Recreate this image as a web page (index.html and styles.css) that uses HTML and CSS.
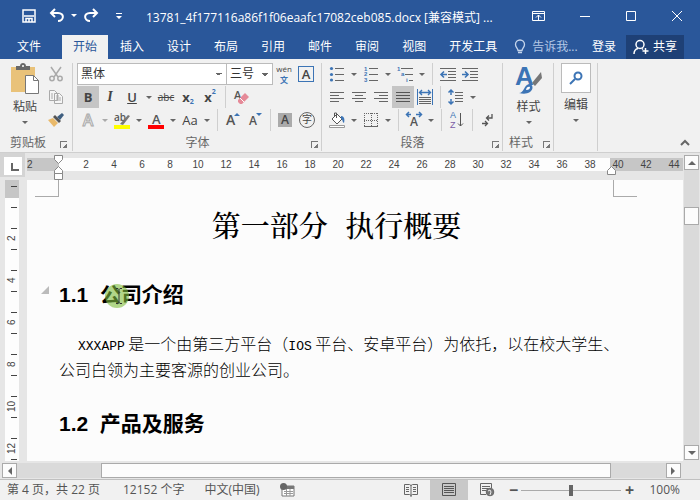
FILE: index.html
```
<!DOCTYPE html>
<html lang="zh-CN">
<head>
    <meta charset="UTF-8">
    <meta name="viewport" content="width=device-width, initial-scale=1.0">
    <title>13781_4f177116a86f1f06eaafc17082ceb085.docx</title>
    <link rel="stylesheet" href="styles.css">
</head>
<body>
    <header class="titlebar">
        <div class="quick-access">
            <button class="icon-btn" aria-label="保存"><svg width="16" height="16" viewBox="0 0 16 16" fill="none" stroke="#fff" stroke-width="1.500"><path d="M2 2h12v12H2zM3 8h10M5 14v-3.500h6V14M8 11v3"/></svg></button>
            <button class="icon-btn" aria-label="撤消"><svg width="16" height="16" viewBox="0 0 16 16" fill="none" stroke="#fff" stroke-width="2"><path d="M6 1L2 5l4 4M2 5h7c7 0 6 8 0 8"/></svg></button>
            <span class="caret"></span>
            <button class="icon-btn" aria-label="恢复"><svg width="16" height="16" viewBox="0 0 16 16" fill="none" stroke="#fff" stroke-width="2"><path d="M10 1l4 4-4 4M14 5H7c-7 0-6 8 0 8"/></svg></button>
            <button class="icon-btn" aria-label="自定义"><svg width="8" height="8" viewBox="0 0 8 8" fill="#fff"><path d="M1 1h6v1H1zM1 4h6L4 7z"/></svg></button>
        </div>
        <h1 class="doc-name">13781_4f177116a86f1f06eaafc17082ceb085.docx [兼容模式] ...</h1>
        <div class="window-controls">
            <button aria-label="功能区显示选项"><svg width="14" height="12" viewBox="0 0 14 12" fill="none" stroke="#fff"><path d="M.5 1.500h12v9H.5zM.5 3.500h12M6.500 10V5M4 7.500L6.500 5 9 7.500"/></svg></button>
            <button aria-label="最小化"><svg width="12" height="12" viewBox="0 0 12 12" stroke="#fff"><path d="M1 6.500h10"/></svg></button>
            <button aria-label="最大化"><svg width="12" height="12" viewBox="0 0 12 12" fill="none" stroke="#fff"><path d="M1.500 1.500h9v9h-9z"/></svg></button>
            <button aria-label="关闭"><svg width="12" height="12" viewBox="0 0 12 12" stroke="#fff"><path d="M1 1l10 10M11 1L1 11"/></svg></button>
        </div>
    </header>

    <nav class="tabs">
        <button class="tab file">文件</button>
        <button class="tab active">开始</button>
        <button class="tab">插入</button>
        <button class="tab">设计</button>
        <button class="tab">布局</button>
        <button class="tab">引用</button>
        <button class="tab">邮件</button>
        <button class="tab">审阅</button>
        <button class="tab">视图</button>
        <button class="tab">开发工具</button>
        <button class="tell-me"><svg width="12" height="16" viewBox="0 0 12 16" fill="none" stroke="#c5d5ec" stroke-width="1.300"><path d="M4 11.500c0-2-2.500-3-2.500-6a4.500 4.500 0 0 1 9 0c0 3-2.500 4-2.500 6zM4 13.500h4"/></svg>告诉我...</button>
        <button class="login">登录</button>
        <button class="share"><svg width="16" height="16" viewBox="0 0 16 16" fill="none" stroke="#fff" stroke-width="1.500"><circle cx="7" cy="5.500" r="4"/><path d="M1 15c0-3 2-5 4-5.500M9 9.500l1 1M12.500 9v6M9.500 12h6"/></svg>共享</button>
    </nav>

    <section class="ribbon">
        <div class="group clipboard">
            <div class="group-body">
                <button class="big-btn">
                    <svg width="30" height="32" viewBox="0 0 30 32"><path d="M1 4h24v25H1z" fill="#e9c279"/><path d="M6 7V3h4c0-4 6-4 6 0h4v4z" fill="#686868"/><circle cx="13" cy="3" r="1" fill="#fff"/><path d="M15.500 12.500h8l5 5v13h-13z" fill="#fff" stroke="#777"/><path d="M23.500 12.500v5h5" fill="none" stroke="#777"/></svg>
                    粘贴
                    <span class="caret"></span>
                </button>
                <div class="stack">
                    <button class="ib" aria-label="剪切"><svg width="16" height="16" viewBox="0 0 16 16" fill="none" stroke="#aaa" stroke-width="1.500"><path d="M3 1l7 10M13 1L6 11"/><circle cx="4" cy="12.500" r="2.200"/><circle cx="12" cy="12.500" r="2.200"/></svg></button>
                    <button class="ib" aria-label="复制"><svg width="16" height="16" viewBox="0 0 16 16" fill="#f6f6f6" stroke="#aaa"><path d="M1.500 1.500h5l3 3v7h-8zM6.500 4.500h5l3 3v7h-8z"/><path d="M3 5h2M3 7h2M3 9h2M8 9h5M8 11h5M8 7h3"/></svg></button>
                    <button class="ib" aria-label="格式刷"><svg width="18" height="16" viewBox="0 0 18 16"><path d="M1 8l5-2 5 5-4 4z" fill="#e9b96a"/><path d="M6 5l2-2 6 6-2 2z" fill="#555"/><path d="M10 5l5-4 2 2-4 5z" fill="#3f5f80"/></svg></button>
                </div>
            </div>
            <div class="group-label">剪贴板<i class="launcher"></i></div>
        </div>

        <div class="group font">
            <div class="rows">
                <div class="row">
                    <select class="font-name" aria-label="字体"><option>黑体</option></select>
                    <select class="font-size" aria-label="字号"><option>三号</option></select>
                    <button class="ib pinyin"><span>wén</span><b>文</b></button>
                    <button class="ib"><span class="char-border">A</span></button>
                </div>
                <div class="row">
                    <button class="ib on bold">B</button>
                    <button class="ib italic">I</button>
                    <button class="ib underline">U</button>
                    <span class="caret"></span>
                    <button class="ib strike">abc</button>
                    <button class="ib script">x<sub>2</sub></button>
                    <button class="ib script">x<sup>2</sup></button>
                    <span class="sep"></span>
                    <button class="ib" aria-label="清除格式"><svg width="16" height="16" viewBox="0 0 16 16"><text x="1" y="10" class="svg-letter" font-size="11">A</text><path d="M5 11l7-7 4 4-7 7H7l-2-2z" fill="#e58a98"/><path d="M7 9l4 4" stroke="#fff"/></svg></button>
                </div>
                <div class="row">
                    <button class="ib effect">A</button>
                    <span class="caret pale"></span>
                    <button class="ib" aria-label="突出显示"><svg width="18" height="20" viewBox="0 0 18 20"><text x="1" y="11" class="svg-letter" font-size="10">ab</text><path d="M7 14l8-9 2 1-7 9z" fill="#777"/><path d="M1 15h16v4H1z" fill="#ff0"/></svg></button>
                    <span class="caret"></span>
                    <button class="ib" aria-label="字体颜色"><svg width="16" height="20" viewBox="0 0 16 20"><text x="4" y="14" class="svg-letter" font-size="13">A</text><path d="M0 15h16v4H0z" fill="#f00"/></svg></button>
                    <span class="caret"></span>
                    <button class="ib case">Aa</button>
                    <span class="caret"></span>
                    <span class="sep"></span>
                    <button class="ib" aria-label="增大字号"><svg width="16" height="18" viewBox="0 0 16 18"><text x="1" y="14" class="svg-letter" font-size="14">A</text><path d="M9 5l3-3 3 3z" fill="#3c74b5"/></svg></button>
                    <button class="ib" aria-label="减小字号"><svg width="16" height="18" viewBox="0 0 16 18"><text x="2" y="14" class="svg-letter" font-size="12">A</text><path d="M9 2h6l-3 3z" fill="#3c74b5"/></svg></button>
                    <span class="sep"></span>
                    <button class="ib"><span class="char-shade">A</span></button>
                    <button class="ib"><span class="char-ring">字</span></button>
                </div>
            </div>
            <div class="group-label">字体<i class="launcher"></i></div>
        </div>

        <div class="group paragraph">
            <div class="rows">
                <div class="row">
                    <button class="ib" aria-label="项目符号"><svg width="16" height="16" viewBox="0 0 16 16"><path d="M6 2.500h9M6 8.500h9M6 14.500h9" stroke="#666"/><g fill="#3c74b5"><circle cx="2.500" cy="2.500" r="1.600"/><circle cx="2.500" cy="8.500" r="1.600"/><circle cx="2.500" cy="14" r="1.600"/></g></svg></button>
                    <span class="caret"></span>
                    <button class="ib" aria-label="编号"><svg width="16" height="16" viewBox="0 0 16 16"><path d="M6 2.500h9M6 8.500h9M6 14.500h9" stroke="#666"/><g fill="#3c74b5" font-family="Liberation Sans" font-size="6" font-weight="bold"><text x="1" y="5">1</text><text x="1" y="10">2</text><text x="1" y="16">3</text></g></svg></button>
                    <span class="caret"></span>
                    <button class="ib" aria-label="多级列表"><svg width="18" height="16" viewBox="0 0 18 16"><path d="M5 2.500h12M9 8.500h8M13 14.500h4" stroke="#666"/><g fill="#3c74b5" font-family="Liberation Sans" font-size="6" font-weight="bold"><text x="1" y="5">1</text><text x="5" y="10">a</text><text x="10" y="16">i</text></g></svg></button>
                    <span class="caret"></span>
                    <span class="sep"></span>
                    <button class="ib" aria-label="减少缩进"><svg width="16" height="14" viewBox="0 0 16 14"><path d="M0 1.500h16M8 4.500h8M8 7.500h8M8 10.500h8M0 13.500h16" stroke="#666"/><path d="M7 7.500H1M4 4.500l-3 3 3 3" fill="none" stroke="#3c74b5" stroke-width="1.600"/></svg></button>
                    <button class="ib" aria-label="增加缩进"><svg width="16" height="14" viewBox="0 0 16 14"><path d="M0 1.500h16M8 4.500h8M8 7.500h8M8 10.500h8M0 13.500h16" stroke="#666"/><path d="M0 7.500h6M3 4.500l3 3-3 3" fill="none" stroke="#3c74b5" stroke-width="1.600"/></svg></button>
                </div>
                <div class="row">
                    <button class="ib" aria-label="左对齐"><svg width="14" height="12" viewBox="0 0 14 12" stroke="#666"><path d="M0 1.500h14M0 4.500h9M0 7.500h14M0 10.500h9"/></svg></button>
                    <button class="ib" aria-label="居中"><svg width="14" height="12" viewBox="0 0 14 12" stroke="#666"><path d="M0 1.500h14M3 4.500h8M0 7.500h14M3 10.500h8"/></svg></button>
                    <button class="ib" aria-label="右对齐"><svg width="14" height="12" viewBox="0 0 14 12" stroke="#666"><path d="M0 1.500h14M5 4.500h9M0 7.500h14M5 10.500h9"/></svg></button>
                    <button class="ib on" aria-label="两端对齐"><svg width="14" height="12" viewBox="0 0 14 12" stroke="#555"><path d="M0 1.500h14M0 4.500h14M0 7.500h14M0 10.500h14"/></svg></button>
                    <button class="ib" aria-label="分散对齐"><svg width="16" height="16" viewBox="0 0 16 16" fill="none" stroke="#3c74b5"><path d="M.5 0v16M15.500 0v16"/><path d="M3 3.500h10M5 1L2.500 3.500 5 6M11 1l2.500 2.500L11 6" stroke-width="1.400"/><path d="M2 8.500h12M2 10.500h12M2 12.500h12M2 14.500h12" stroke="#666"/></svg></button>
                    <span class="sep"></span>
                    <button class="ib" aria-label="行距"><svg width="16" height="16" viewBox="0 0 16 16" fill="none" stroke="#3c74b5"><path d="M3 1v5M3 10v5M.5 3.500L3 1l2.500 2.500M.5 12.500L3 15l2.500-2.500" stroke-width="1.500"/><path d="M7 3.500h8M7 6.500h8M7 9.500h8M7 12.500h8" stroke="#666"/></svg></button>
                    <span class="caret"></span>
                </div>
                <div class="row">
                    <button class="ib" aria-label="底纹"><svg width="18" height="16" viewBox="0 0 18 16" fill="#fff" stroke="#555"><path d="M4 7l5-5 5 5-5 5zM6.500 5V1h2v5"/><path d="M13 4c3 0 4 3 3 7-2-1-1-4-3-4z" fill="#3c74b5" stroke="none"/><path d="M1.500 13.500h15v2h-15z" stroke="#999"/></svg></button>
                    <span class="caret"></span>
                    <button class="ib" aria-label="边框"><svg width="14" height="14" viewBox="0 0 14 14" fill="none" stroke="#666"><path d="M0 .5h14M.5 0v14M7.500 0v14M13.500 0v14M0 7.500h14" stroke-dasharray="1 1"/><path d="M0 13.500h14"/></svg></button>
                    <span class="caret"></span>
                    <span class="sep"></span>
                    <button class="ib" aria-label="中文版式"><svg width="18" height="18" viewBox="0 0 18 18"><text x="5" y="15" class="svg-letter" font-size="12">A</text><path d="M6 3.500H2M4 1L1.500 3.500 4 6M11 3.500h5M14 1l2.500 2.500L14 6" fill="none" stroke="#3c74b5" stroke-width="1.500"/></svg></button>
                    <span class="caret"></span>
                    <span class="sep"></span>
                    <button class="ib" aria-label="排序"><svg width="16" height="20" viewBox="0 0 16 20" font-family="Liberation Sans" font-size="9"><text x="1" y="8" fill="#3c74b5">A</text><text x="1" y="18" fill="#7b5ba6">Z</text><path d="M11.500 3v13M9 13.500l2.500 2.500 2.500-2.500" fill="none" stroke="#555"/></svg></button>
                    <span class="sep"></span>
                    <button class="ib" aria-label="显示编辑标记"><svg width="14" height="14" viewBox="0 0 14 14" fill="none" stroke="#555" stroke-width="1.300"><path d="M11 1v4H6M8 2.500L5.500 5 8 7.500M1 10.500h5M4 8l2.500 2.500L4 13"/></svg></button>
                </div>
            </div>
            <div class="group-label">段落<i class="launcher"></i></div>
        </div>

        <div class="group styles">
            <div class="group-body">
                <button class="big-btn">
                    <svg width="30" height="32" viewBox="0 0 30 32"><text x="1" y="22" fill="#3c74b5" font-family="Liberation Sans" font-size="26" font-weight="bold">A</text><path d="M18 20l9-11 1 6-7 8z" fill="#777"/><path d="M5 30c5 0 5-8 10-9 4 0 5 5 1 8-3 2-7 2-11 1z" fill="#3c74b5"/><path d="M12 27c0-3 3-4 4-3 0 2-1 3-4 3z" fill="#fff"/></svg>
                    样式
                    <span class="caret"></span>
                </button>
            </div>
            <div class="group-label">样式<i class="launcher"></i></div>
        </div>

        <div class="group editing">
            <div class="group-body">
                <button class="big-btn">
                    <span class="find-box"><svg width="14" height="14" viewBox="0 0 14 14" fill="none" stroke="#3c74b5" stroke-width="2"><circle cx="9" cy="5" r="3.500"/><path d="M6 8l-5 5"/></svg></span>
                    编辑
                    <span class="caret"></span>
                </button>
            </div>
        </div>
        <button class="collapse" aria-label="折叠功能区"><svg width="10" height="8" viewBox="0 0 10 8" fill="none" stroke="#666" stroke-width="2"><path d="M1 6l4-4 4 4"/></svg></button>
    </section>

    <main class="workspace">
        <div class="corner"><span class="tab-stop"></span></div>
        <div class="ruler-h">
            <div class="numbers">
                <span class="neg">2</span><span>2</span><span>4</span><span>6</span><span>8</span><span>10</span><span>12</span><span>14</span><span>16</span><span>18</span><span>20</span><span>22</span><span>24</span><span>26</span><span>28</span><span>30</span><span>32</span><span>34</span><span>36</span><span>38</span><span>40</span><span>42</span><span>44</span>
            </div>
            <svg class="indent-left" width="10" height="26" viewBox="0 0 10 26" fill="#fff" stroke="#888"><path d="M.5.500h8v4l-4 4-4-4zM4.500 11.500l4 4v3h-8v-3zM.5 18.500h8v6h-8z"/></svg>
            <svg class="indent-right" width="10" height="10" viewBox="0 0 10 10" fill="#fff" stroke="#888"><path d="M4.500.500l4 4v4h-8v-4z"/></svg>
        </div>
        <div class="scroll-v">
            <button class="scroll-btn" aria-label="向上"><i class="arrow up"></i></button>
            <div class="gap-top"></div>
            <div class="thumb-v"></div>
            <div class="gap-bottom"></div>
            <button class="scroll-btn" aria-label="向下"><i class="arrow down"></i></button>
        </div>
        <div class="ruler-v">
            <div class="strip"><span>2</span><span>4</span><span>6</span><span>8</span><span>10</span><span>12</span></div>
        </div>
        <article class="page">
            <i class="crop left"></i>
            <i class="crop right"></i>
            <h2 class="chapter">第一部分 执行概要</h2>
            <h3 class="section"><i class="fold"></i>1.1&nbsp; <span class="clicked">公<svg class="ibeam" width="8" height="16" viewBox="0 0 8 16" fill="none" stroke="#333"><path d="M1 .500h2l1 1 1-1h2M4 1.500v13M1 15.500h2l1-1 1 1h2"/></svg></span>司介绍</h3>
            <p class="text"><span class="latin lead">XXXAPP</span> 是一个由第三方平台（<span class="latin">IOS</span> 平台、安卓平台）为依托，以在校大学生、<br>公司白领为主要客源的创业公司。</p>
            <h3 class="section">1.2&nbsp; 产品及服务</h3>
        </article>
        <div class="scroll-h">
            <button class="scroll-btn" aria-label="向左"><i class="arrow prev"></i></button>
            <div class="gap-left"></div>
            <div class="thumb-h"></div>
            <div class="gap-right"></div>
            <button class="scroll-btn" aria-label="向右"><i class="arrow next"></i></button>
        </div>
    </main>

    <footer class="statusbar">
        <span class="page-count">第 4 页，共 22 页</span>
        <span>12152 个字</span>
        <span>中文(中国)</span>
        <svg width="14" height="14" viewBox="0 0 14 14"><path d="M2 3h12v10H2z" fill="#fff" stroke="#777"/><path d="M2 3h12v3H2z" fill="#777"/><path d="M4 8.500h9M4 10.500h9M6.500 6v7M10 6v7" stroke="#999"/><circle cx="3.500" cy="3.500" r="3.500" fill="#666"/></svg>
        <div class="views">
            <button aria-label="阅读视图"><svg width="14" height="14" viewBox="0 0 14 14" fill="none" stroke="#666"><path d="M.5 1.500h5l1.500 1 1.500-1h5v10h-5l-1.500 1-1.500-1h-5zM7 2v12M2 4.500h3M2 6.500h3M2 8.500h3M9 4.500h3M9 6.500h3M9 8.500h3"/></svg></button>
            <button class="current" aria-label="页面视图"><svg width="14" height="14" viewBox="0 0 14 14" fill="none" stroke="#555"><path d="M.5.500h13v12H.5zM2 3.500h10M2 5.500h10M2 7.500h10M2 9.500h10"/></svg></button>
            <button aria-label="Web 版式"><svg width="14" height="14" viewBox="0 0 14 14" fill="none" stroke="#666"><path d="M6 11.500H.5V.500h11V5M2 3.500h8M2 5.500h6M2 7.500h4"/><circle cx="10" cy="9" r="3.800" fill="#777"/><path d="M8 8l2-1 1 2-1 3" stroke="#eee"/></svg></button>
        </div>
        <div class="zoom">
            <button aria-label="缩小">−</button>
            <input type="range" min="0" max="100" value="50" aria-label="缩放">
            <button aria-label="放大">+</button>
            <span class="percent">100%</span>
        </div>
    </footer>
</body>
</html>
```
FILE: styles.css
```
* {
    margin: 0;
    padding: 0;
    box-sizing: border-box;
}

body {
    height: 100vh;
    display: flex;
    flex-direction: column;
    overflow: hidden;
    font-family: "Open Sans", "Noto Sans CJK SC", sans-serif;
    font-size: 12px;
    line-height: 16px;
    color: #444;
    background: #e6e6e6;
}

button {
    border: none;
    background: none;
    font: inherit;
    color: inherit;
    white-space: nowrap;
    display: flex;
    align-items: center;
    justify-content: center;
}

svg {
    display: block;
    flex: none;
    overflow: visible;
}

/* title bar */
.titlebar {
    display: flex;
    align-items: center;
    height: 35px;
    padding: 0 0 4px 18px;
    background: #2a579a;
    color: #fff;
}

.quick-access {
    display: flex;
    align-items: center;
    width: 128px;
}

.icon-btn {
    width: 22px;
    height: 22px;
    margin-right: 6px;
}

.icon-btn + .caret {
    margin-left: -6px;
}

.doc-name {
    flex: 1;
    min-width: 0;
    overflow: hidden;
    white-space: nowrap;
    font-size: 12px;
    font-weight: 400;
    padding-top: 4px;
}

.window-controls {
    display: flex;
}

.window-controls button {
    width: 46px;
    height: 24px;
}

/* ribbon tabs */
.tabs {
    display: flex;
    gap: 1px;
    height: 24px;
    padding-right: 16px;
    background: #2a579a;
    color: #fff;
}

.tab {
    padding: 0 11px;
}

.tab.file {
    padding: 0 20px 0 17px;
}

.tab.active {
    background: #f1f1f1;
    color: #2a579a;
}

.tell-me {
    gap: 6px;
    padding-left: 5px;
    color: #b4c8e6;
}

.login {
    margin-left: auto;
    padding: 0 9px;
}

.share {
    gap: 4px;
    width: 58px;
    background: #1e4076;
}

/* ribbon */
.ribbon {
    display: flex;
    height: 94px;
    padding: 4px 0 1px;
    background: #f1f1f1;
    border-bottom: 1px solid #cfcfcf;
}

.group {
    display: flex;
    flex-direction: column;
    justify-content: space-between;
    padding: 0 3px 0 4px;
    border-right: 1px solid #cfcfcf;
}

.clipboard {
    width: 73px;
    padding: 0 5px 0 8px;
}

.font {
    width: 249px;
}

.paragraph {
    width: 181px;
}

.styles {
    width: 51px;
}

.editing {
    width: 44px;
}

.group-body {
    display: flex;
    justify-content: space-between;
}

.group-label {
    display: flex;
    align-items: center;
    justify-content: center;
    position: relative;
    height: 17px;
    color: #666;
}

.clipboard .group-label,
.styles .group-label {
    justify-content: flex-start;
    padding-left: 2px;
}

.launcher {
    position: absolute;
    right: 0;
    bottom: 3px;
    width: 7px;
    height: 7px;
    border: 1px solid #777;
    border-right: none;
    border-bottom: none;
}

.launcher::after {
    content: '';
    position: absolute;
    left: 2px;
    top: 2px;
    width: 4px;
    height: 4px;
    background: linear-gradient(135deg, transparent 50%, #777 50%);
}

.row {
    display: flex;
    align-items: center;
    height: 22px;
}

.row + .row {
    margin-top: 1px;
}

.ib {
    width: 22px;
    height: 22px;
    flex: none;
}

.on {
    background: #c5c5c5;
}

.caret {
    width: 12px;
    flex: none;
    display: flex;
    justify-content: center;
    color: #666;
}

.titlebar .caret {
    color: #fff;
}

.caret.pale {
    color: #aaa;
}

.caret::before {
    content: '';
    border: 3px solid transparent;
    border-top-color: currentColor;
    border-bottom: none;
}

.sep {
    width: 1px;
    height: 22px;
    margin: 0 4px;
    background: #cfcfcf;
}

.big-btn {
    flex-direction: column;
    flex: none;
    width: 34px;
    height: 70px;
    justify-content: flex-start;
    gap: 4px;
}

.styles .big-btn,
.editing .big-btn {
    width: 100%;
    flex: 1;
}

.big-btn .caret {
    margin-top: 2px;
}

.stack {
    display: flex;
    flex-direction: column;
    gap: 1px;
}

.find-box {
    display: flex;
    align-items: center;
    justify-content: center;
    width: 30px;
    height: 30px;
    background: #fff;
    border: 1px solid #bbb;
}

select {
    appearance: none;
    height: 22px;
    padding: 0 3px;
    border: 1px solid #bbb;
    border-radius: 0;
    font: inherit;
    color: #333;
    background:
        linear-gradient(to top right, transparent 50%, #666 50%) right 7px center / 3px 3px no-repeat,
        linear-gradient(to top left, transparent 50%, #666 50%) right 4px center / 3px 3px no-repeat,
        #fff;
}

.font-name {
    width: 150px;
}

.font-size {
    width: 47px;
    margin-left: -1px;
}

.pinyin {
    flex-direction: column;
    font-size: 8px;
    line-height: 11px;
}

.pinyin b {
    color: #3c74b5;
}

.char-border {
    width: 16px;
    height: 16px;
    border: 1px solid #3c74b5;
    font-weight: 600;
    font-size: 13px;
    line-height: 14px;
}

.char-shade {
    width: 14px;
    height: 14px;
    background: #aaa;
    font-weight: 600;
    line-height: 14px;
}

.char-ring {
    width: 16px;
    height: 16px;
    border: 1px solid #666;
    border-radius: 50%;
    font-size: 10px;
    line-height: 13px;
}

.bold {
    font-weight: 700;
    font-size: 13px;
}

.italic {
    font-family: "Liberation Serif", serif;
    font-style: italic;
    font-weight: 700;
    font-size: 14px;
}

.underline {
    font-weight: 600;
    font-size: 13px;
    text-decoration: underline;
}

.strike {
    font-size: 10px;
    text-decoration: line-through;
}

.script {
    font-weight: 700;
    font-size: 13px;
}

.script sub,
.script sup {
    font-size: 7px;
    line-height: 8px;
    color: #3c74b5;
}

.script sub {
    align-self: flex-end;
    padding-bottom: 2px;
}

.script sup {
    align-self: flex-start;
    padding-top: 2px;
}

.effect {
    font-weight: 600;
    font-size: 16px;
    color: #f1f1f1;
    -webkit-text-stroke: 1px #aaa;
}

.case {
    font-size: 13px;
}

.svg-letter {
    fill: #555;
    font-family: "Open Sans", sans-serif;
    font-weight: 600;
}

.collapse {
    margin-left: auto;
    align-self: flex-end;
    width: 30px;
    height: 16px;
}

/* rulers and page */
.workspace {
    flex: 1;
    min-height: 0;
    display: grid;
    grid-template-columns: 27px minmax(0, 1fr) 17px;
    grid-template-rows: 27px minmax(0, 1fr) 18px;
}

.corner {
    display: flex;
    align-items: center;
    justify-content: center;
    height: 24px;
    width: 25px;
    padding-top: 1px;
    background: #d4d4d4;
}

.tab-stop {
    width: 18px;
    height: 18px;
    background: #fff;
    border: 6px solid #fff;
    position: relative;
}

.tab-stop::after {
    content: '';
    position: absolute;
    left: 1px;
    top: 0;
    width: 6px;
    height: 6px;
    border: solid #666;
    border-width: 0 0 2px 2px;
}

.ruler-h {
    position: relative;
    padding-top: 5px;
}

.numbers {
    display: flex;
    height: 13px;
    overflow: hidden;
    background: linear-gradient(90deg, #c6c6c6 32px, #fdfdfd 32px, #fdfdfd 583px, #c6c6c6 583px);
    font-family: "Liberation Sans", sans-serif;
    font-size: 10px;
    line-height: 13px;
}

.numbers span {
    flex: none;
    width: 28px;
    text-align: center;
}

.numbers .neg {
    width: 45px;
    text-align: left;
}

.indent-left {
    position: absolute;
    left: 27px;
    top: 2px;
}

.indent-right {
    position: absolute;
    left: 580px;
    top: 13px;
}

.ruler-v {
    padding-left: 5px;
    overflow: hidden;
}

.strip {
    width: 14px;
    height: 100%;
    padding-top: 37px;
    background:
        linear-gradient(#444, #444) 6px 6px / 6px 1px no-repeat,
        linear-gradient(#c6c6c6, #c6c6c6) 0 0 / 14px 18px no-repeat,
        linear-gradient(transparent 20px, #444 20px) 6px 7px / 6px 21px repeat-y,
        #fdfdfd;
}

.strip span {
    display: block;
    width: 14px;
    height: 42px;
    text-align: center;
    line-height: 14px;
    writing-mode: vertical-rl;
    transform: rotate(180deg);
    font-family: "Liberation Sans", sans-serif;
    font-size: 10px;
}

.page {
    position: relative;
    background: #fcfcfc;
    color: #000;
    padding: 30px 37px 0 32px;
    overflow: hidden;
}

.crop {
    position: absolute;
    top: 0;
    width: 24px;
    height: 17px;
    border-bottom: 1px solid #aaa;
}

.crop.left {
    left: 8px;
    border-right: 1px solid #aaa;
}

.crop.right {
    left: 586px;
    border-left: 1px solid #aaa;
}

.chapter {
    font-family: "Liberation Mono", "Noto Serif CJK SC", "Noto Sans CJK SC", serif;
    font-size: 29px;
    font-weight: 500;
    line-height: 40px;
    text-align: center;
    padding-right: 32px;
}

.section {
    position: relative;
    margin: 32px 0 22px;
    font-family: "Liberation Sans", "Noto Sans CJK SC", sans-serif;
    font-size: 21px;
    font-weight: 700;
    line-height: 26px;
}

.fold {
    position: absolute;
    left: -18px;
    top: 4px;
    border: 4px solid transparent;
    border-right-color: #bbb;
    border-bottom-color: #bbb;
}

.clicked {
    position: relative;
}

.clicked::after {
    content: '';
    position: absolute;
    left: 5px;
    top: 1px;
    width: 24px;
    height: 24px;
    border-radius: 50%;
    background: rgba(126, 188, 60, 0.6);
}

.ibeam {
    position: absolute;
    left: 15px;
    top: 5px;
    z-index: 1;
}

.text {
    font-family: "Noto Sans CJK SC", sans-serif;
    font-size: 16px;
    font-weight: 300;
    line-height: 26px;
    white-space: nowrap;
}

.latin {
    font-family: "Liberation Mono", monospace;
    font-size: 13px;
    line-height: 16px;
}

.lead {
    margin-left: 19px;
}

.text + .section {
    margin-top: 29px;
}

/* scroll bars */
.scroll-v {
    grid-column: 3;
    grid-row: 1 / 3;
    display: flex;
    flex-direction: column;
    margin: 2px 1px 1px;
    background: #dadada;
}

.scroll-h {
    grid-column: 1 / 3;
    display: flex;
    margin: 2px 2px 1px;
    background: #dadada;
}

.scroll-btn {
    flex: none;
    width: 15px;
    height: 15px;
    background: #fcfcfc;
    border: 1px solid #aaa;
}

.gap-top {
    flex: 37;
}

.thumb-v {
    flex: 17;
    background: #fcfcfc;
    border: 1px solid #aaa;
}

.gap-bottom {
    flex: 222;
}

.gap-left {
    flex: 84;
}

.thumb-h {
    flex: 510;
    background: #fcfcfc;
    border: 1px solid #aaa;
}

.gap-right {
    flex: 55;
}

.arrow {
    border: 4px solid transparent;
}

.up {
    border-top: none;
    border-bottom-color: #666;
}

.down {
    border-bottom: none;
    border-top-color: #666;
}

.prev {
    border-left: none;
    border-right-color: #666;
}

.next {
    border-right: none;
    border-left-color: #666;
}

/* status bar */
.statusbar {
    display: flex;
    align-items: center;
    gap: 20px;
    height: 21px;
    padding: 0 20px 0 7px;
    background: #f1f1f1;
    border-top: 1px solid #c0c0c0;
    color: #555;
    white-space: nowrap;
}

.page-count {
    min-width: 96px;
}

.views {
    display: flex;
    align-self: stretch;
    margin-left: auto;
}

.views button {
    width: 38px;
}

.views .current {
    background: #c8c8c8;
}

.zoom {
    display: flex;
    align-items: center;
    margin-left: -21px;
}

.zoom button {
    width: 16px;
    font-size: 16px;
    font-weight: 700;
}

.zoom input {
    appearance: none;
    width: 100px;
    height: 12px;
    background: linear-gradient(#aaa, #aaa) center / 100% 1px no-repeat;
}

.zoom input::-webkit-slider-thumb {
    appearance: none;
    width: 4px;
    height: 11px;
    background: #666;
}

.percent {
    margin-left: 12px;
}
```
